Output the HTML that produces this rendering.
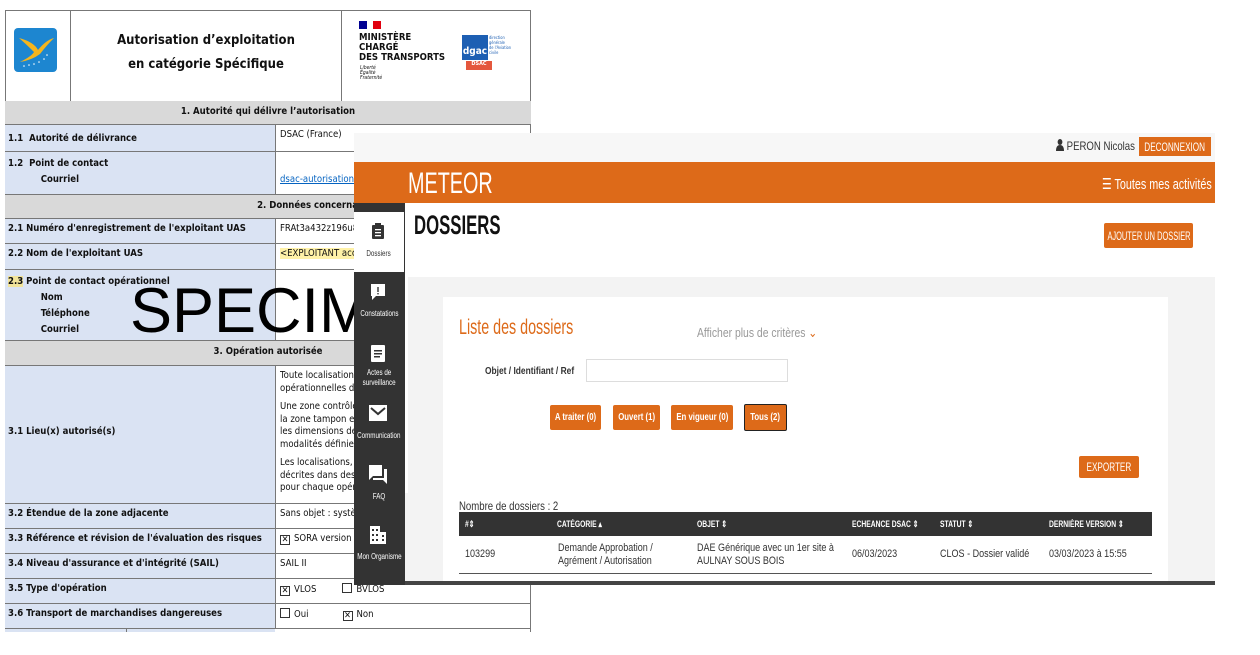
<!DOCTYPE html>
<html><head><meta charset="utf-8"><style>
*{margin:0;padding:0;box-sizing:border-box}
body{width:1260px;height:655px;background:#fff;position:relative;overflow:hidden;font-family:"Liberation Sans",sans-serif}
.a{position:absolute}
.doc{font-family:"DejaVu Sans Condensed","Liberation Sans",sans-serif;font-size:9.5px;color:#111}
.lab{position:absolute;left:5px;width:270px;background:#dae3f3;border-bottom:1px solid #777;padding:4px 0 0 3px;font-weight:bold}
.val{position:absolute;left:275px;width:256px;border-bottom:1px solid #777;border-left:1px solid #777;padding:4px 0 0 4px;white-space:nowrap;overflow:hidden}
.sec{position:absolute;left:5px;width:526px;background:#d9d9d9;border-bottom:1px solid #777;text-align:center;font-weight:bold;padding-top:5px;white-space:nowrap}
.m{white-space:nowrap;transform:scaleX(.8);transform-origin:left}
.btn{position:absolute;background:#dd6a19;color:#fff;font-size:10px;font-weight:bold;border-radius:2px;white-space:nowrap;display:flex;justify-content:center;align-items:center}
.btn span,.side span{display:inline-block;transform:scaleX(.78);transform-origin:center;flex:none}
.side{position:absolute;left:340px;width:78px;text-align:center;color:#fff;font-size:8px;white-space:nowrap;display:flex;justify-content:center}
.th{position:absolute;top:519px;color:#fff;font-size:9px;font-weight:bold;white-space:nowrap;transform:scaleX(.75);transform-origin:left}
.td{position:absolute;font-size:11px;color:#333;line-height:13px;white-space:nowrap;transform:scaleX(.82);transform-origin:left}
.cb{display:inline-block;width:10px;height:10px;border:1px solid #333;vertical-align:-1px;margin-right:4px;font-size:9px;line-height:8px;text-align:center}
</style></head><body>
<div class="doc">
<div class="a" style="left:5px;top:10px;width:526px;height:622px;border:1px solid #777;border-bottom:none"></div>
<div class="a" style="left:70px;top:10px;width:1px;height:91px;background:#777"></div>
<div class="a" style="left:341px;top:10px;width:1px;height:91px;background:#777"></div>
<div class="a" style="left:14px;top:28px;width:43px;height:44px;background:#1d86d0;border-radius:4px">
<svg width="43" height="44"><path d="M5 10 Q20 14 24 22 Q32 12 40 10 Q32 18 26 26 Q18 32 6 34 Q18 28 20 24 Q12 16 5 10Z" fill="#f5b51d"/><g fill="#fff"><circle cx="10" cy="38" r=".8"/><circle cx="15" cy="37" r=".8"/><circle cx="20" cy="36" r=".8"/><circle cx="25" cy="34" r=".8"/><circle cx="30" cy="31" r=".8"/><circle cx="33" cy="27" r=".8"/></g></svg></div>
<div class="a" style="left:71px;top:29px;width:270px;text-align:center;font-weight:bold;font-size:13px;line-height:24px">Autorisation d’exploitation<br>en catégorie Spécifique</div>
<div class="a" style="left:359px;top:21px;width:8px;height:8px;background:#000091"></div><div class="a" style="left:367px;top:21px;width:6px;height:8px;background:#fff"></div><div class="a" style="left:373px;top:21px;width:8px;height:8px;background:#e1000f"></div>
<div class="a" style="left:359px;top:33px;font-weight:bold;font-size:9.5px;line-height:10px">MINISTÈRE<br>CHARGÉ<br>DES TRANSPORTS</div>
<div class="a" style="left:360px;top:66px;font-size:5px;font-style:italic;line-height:5px">Liberté<br>Égalité<br>Fraternité</div>
<div class="a" style="left:462px;top:35px;width:26px;height:25px;background:#1d5fb3;color:#fff;font-size:10px;font-weight:bold;padding-top:11px;text-align:center">dgac</div>
<div class="a" style="left:489px;top:35px;font-size:4px;line-height:5px;color:#1d5fb3">direction<br>générale<br>de l'Aviation<br>civile</div>
<div class="a" style="left:466px;top:61px;width:26px;height:9px;background:#e4573d;color:#fff;font-size:5.5px;text-align:center;font-weight:bold">DSAC</div>

<div class="sec" style="top:101px;height:24px">1. Autorité qui délivre l’autorisation</div>
<div class="lab" style="top:125px;height:27px;padding-top:8px">1.1&nbsp; Autorité de délivrance</div><div class="val" style="top:125px;height:27px">DSAC (France)</div>
<div class="lab" style="top:152px;height:43px;line-height:16px">1.2&nbsp; Point de contact<br>&nbsp;&nbsp;&nbsp;&nbsp;&nbsp;&nbsp;&nbsp;&nbsp;&nbsp;&nbsp;&nbsp;Courriel</div><div class="val" style="top:152px;height:43px;padding-top:22px"><span style="color:#0563c1;text-decoration:underline">dsac-autorisations@aviation</span></div>
<div class="sec" style="top:195px;height:24px;padding-left:170px">2. Données concernant l’exploitant UAS</div>
<div class="lab" style="top:219px;height:25px">2.1 Numéro d'enregistrement de l'exploitant UAS</div><div class="val" style="top:219px;height:25px">FRAt3a432z196u8</div>
<div class="lab" style="top:244px;height:26px">2.2 Nom de l'exploitant UAS</div><div class="val" style="top:244px;height:26px"><span style="background:#fff2a8">&lt;EXPLOITANT accord&gt;</span></div>
<div class="lab" style="top:270px;height:71px;line-height:16px"><span style="background:#f2e49a">2.3</span> Point de contact opérationnel<br>&nbsp;&nbsp;&nbsp;&nbsp;&nbsp;&nbsp;&nbsp;&nbsp;&nbsp;&nbsp;&nbsp;Nom<br>&nbsp;&nbsp;&nbsp;&nbsp;&nbsp;&nbsp;&nbsp;&nbsp;&nbsp;&nbsp;&nbsp;Téléphone<br>&nbsp;&nbsp;&nbsp;&nbsp;&nbsp;&nbsp;&nbsp;&nbsp;&nbsp;&nbsp;&nbsp;Courriel</div><div class="val" style="top:270px;height:71px"></div>
<div class="sec" style="top:341px;height:25px">3. Opération autorisée</div>
<div class="lab" style="top:366px;height:138px;padding-top:60px">3.1 Lieu(x) autorisé(s)</div>
<div class="val" style="top:366px;height:138px;line-height:12.5px">Toute localisation<br>opérationnelles de<div style="height:6px"></div>Une zone contrôlé<br>la zone tampon es<br>les dimensions de<br>modalités définies<div style="height:6px"></div>Les localisations, z<br>décrites dans des<br>pour chaque opér</div>
<div class="lab" style="top:504px;height:25px">3.2 Étendue de la zone adjacente</div><div class="val" style="top:504px;height:25px">Sans objet : systèm</div>
<div class="lab" style="top:529px;height:25px">3.3 Référence et révision de l'évaluation des risques</div><div class="val" style="top:529px;height:25px"><span class="cb">✕</span>SORA version</div>
<div class="lab" style="top:554px;height:25px">3.4 Niveau d'assurance et d'intégrité (SAIL)</div><div class="val" style="top:554px;height:25px">SAIL II</div>
<div class="lab" style="top:579px;height:25px">3.5 Type d'opération</div><div class="val" style="top:579px;height:25px"><span class="cb">✕</span>VLOS<span style="display:inline-block;width:26px"></span><span class="cb"></span>BVLOS</div>
<div class="lab" style="top:604px;height:25px">3.6 Transport de marchandises dangereuses</div><div class="val" style="top:604px;height:25px"><span class="cb"></span>Oui<span style="display:inline-block;width:34px"></span><span class="cb">✕</span>Non</div>
<div class="a" style="left:5px;top:629px;width:270px;height:3px;background:#dae3f3"></div>
<div class="a" style="left:126px;top:629px;width:1px;height:3px;background:#777"></div>
</div>
<div class="a" style="left:130px;top:276px;font-size:63px;color:#000;line-height:70px;white-space:nowrap">SPECIMEN</div>

<!-- Meteor -->
<div class="a" style="left:354px;top:133px;width:861px;height:452px;background:#f3f3f3"></div>
<div class="a" style="left:354px;top:133px;width:861px;height:29px;background:#f7f7f7"></div>
<div class="a m" style="left:1056px;top:139px;font-size:12px;color:#333"><svg width="10" height="12" style="vertical-align:-1px"><circle cx="5" cy="3" r="3" fill="#333"/><path d="M0 12 Q0 6 5 6 Q10 6 10 12Z" fill="#333"/></svg> PERON Nicolas</div>
<div class="btn" style="left:1139px;top:137px;width:72px;height:19px;font-weight:normal;border-radius:0;font-size:12px"><span style="transform:scaleX(.68)">DECONNEXION</span></div>
<div class="a" style="left:354px;top:162px;width:861px;height:41px;background:#dd6a19"></div>
<div class="a m" style="left:408px;top:167px;font-size:30px;color:#fff;transform:scaleX(.66)">METEOR</div>
<div class="a m" style="left:1102px;top:175px;font-size:15px;color:#fff;transform:scaleX(.72)">☰ Toutes mes activités</div>
<div class="a" style="left:354px;top:203px;width:51px;height:382px;background:#333"></div>
<div class="a" style="left:405px;top:203px;width:3px;height:290px;background:#fff"></div>
<div class="a" style="left:408px;top:203px;width:807px;height:74px;background:#fff"></div>
<div class="a" style="left:354px;top:212px;width:50px;height:60px;background:#fff"></div>
<div class="a m" style="left:414px;top:210px;font-size:27px;color:#111;transform:scaleX(.62);font-weight:bold">DOSSIERS</div>
<div class="btn" style="left:1104px;top:223px;width:89px;height:25px;font-weight:normal;font-size:12px"><span style="transform:scaleX(.62)">AJOUTER UN DOSSIER</span></div>
<svg class="a" style="left:371px;top:222px" width="14" height="18"><rect x="1" y="3" width="12" height="14" rx="1" fill="#333"/><rect x="4" y="1" width="6" height="4" fill="#333"/><g fill="#fff"><rect x="4" y="7" width="6" height="1.3"/><rect x="4" y="10" width="6" height="1.3"/><rect x="4" y="13" width="6" height="1.3"/></g></svg>
<div class="side" style="top:249px;color:#333"><span>Dossiers</span></div>
<svg class="a" style="left:370px;top:283px" width="16" height="18"><path d="M1 1h14v12H6l-4 4V13H1z" fill="#fff"/><rect x="7.3" y="4" width="1.4" height="5" fill="#333"/><rect x="7.3" y="10" width="1.4" height="1.4" fill="#333"/></svg>
<div class="side" style="top:309px"><span>Constatations</span></div>
<svg class="a" style="left:370px;top:343px" width="16" height="20"><rect x="1" y="2" width="14" height="17" rx="1" fill="#fff"/><g fill="#333"><rect x="4" y="7" width="8" height="1.5"/><rect x="4" y="10" width="8" height="1.5"/><rect x="4" y="13" width="6" height="1.5"/></g></svg>
<div class="side" style="top:368px;line-height:10px"><span>Actes de<br>surveillance</span></div>
<svg class="a" style="left:369px;top:405px" width="18" height="16"><rect x="0" y="0" width="18" height="16" fill="#fff"/><path d="M2 3l7 6 7-6" stroke="#333" stroke-width="2" fill="none"/></svg>
<div class="side" style="top:431px"><span>Communication</span></div>
<svg class="a" style="left:369px;top:465px" width="18" height="20"><path d="M0 0h13v11H4l-4 4z" fill="#fff"/><path d="M15 4h3v15l-4-4H4v-2h11z" fill="#fff"/></svg>
<div class="side" style="top:492px"><span>FAQ</span></div>
<svg class="a" style="left:370px;top:526px" width="16" height="18"><rect x="0" y="0" width="10" height="18" fill="#fff"/><rect x="10" y="6" width="6" height="12" fill="#fff"/><g fill="#333"><rect x="2" y="3" width="2" height="2"/><rect x="6" y="3" width="2" height="2"/><rect x="2" y="8" width="2" height="2"/><rect x="6" y="8" width="2" height="2"/><rect x="2" y="13" width="2" height="2"/><rect x="6" y="13" width="2" height="2"/><rect x="12" y="9" width="2" height="2"/><rect x="12" y="13" width="2" height="2"/></g></svg>
<div class="side" style="top:552px"><span>Mon Organisme</span></div>

<div class="a" style="left:443px;top:297px;width:725px;height:288px;background:#fff"></div>
<div class="a m" style="left:459px;top:316px;font-size:21px;color:#dd6a19;transform:scaleX(.68)">Liste des dossiers</div>
<div class="a m" style="left:697px;top:325px;font-size:13px;color:#999">Afficher plus de critères <span style="color:#dd6a19">⌄</span></div>
<div class="a m" style="left:485px;top:365px;font-size:10.5px;font-weight:bold;color:#333">Objet / Identifiant / Ref</div>
<div class="a" style="left:586px;top:359px;width:202px;height:23px;border:1px solid #ddd"></div>
<div class="btn" style="left:550px;top:405px;width:51px;height:25px"><span>A traiter (0)</span></div>
<div class="btn" style="left:613px;top:405px;width:47px;height:25px"><span>Ouvert (1)</span></div>
<div class="btn" style="left:671px;top:405px;width:62px;height:25px"><span>En vigueur (0)</span></div>
<div class="btn" style="left:744px;top:404px;width:43px;height:27px;border:1px solid #222"><span>Tous (2)</span></div>
<div class="btn" style="left:1079px;top:456px;width:60px;height:22px;font-weight:normal;font-size:12px"><span style="transform:scaleX(.68)">EXPORTER</span></div>
<div class="a m" style="left:459px;top:499px;font-size:12px;color:#333">Nombre de dossiers : 2</div>
<div class="a" style="left:459px;top:512px;width:693px;height:24px;background:#333"></div>
<div class="th" style="left:465px">#⇕</div>
<div class="th" style="left:557px">CATÉGORIE ▴</div>
<div class="th" style="left:697px">OBJET ⇕</div>
<div class="th" style="left:852px">ECHEANCE DSAC ⇕</div>
<div class="th" style="left:940px">STATUT ⇕</div>
<div class="th" style="left:1049px">DERNIÈRE VERSION ⇕</div>
<div class="td" style="left:465px;top:548px">103299</div>
<div class="td" style="left:558px;top:542px">Demande Approbation /<br>Agrément / Autorisation</div>
<div class="td" style="left:697px;top:542px">DAE Générique avec un 1er site à<br>AULNAY SOUS BOIS</div>
<div class="td" style="left:852px;top:548px">06/03/2023</div>
<div class="td" style="left:940px;top:548px">CLOS - Dossier validé</div>
<div class="td" style="left:1049px;top:548px">03/03/2023 à 15:55</div>
<div class="a" style="left:459px;top:573px;width:693px;height:1px;background:#555"></div>
<div class="a" style="left:405px;top:581px;width:810px;height:4px;background:#444"></div>
</body></html>
